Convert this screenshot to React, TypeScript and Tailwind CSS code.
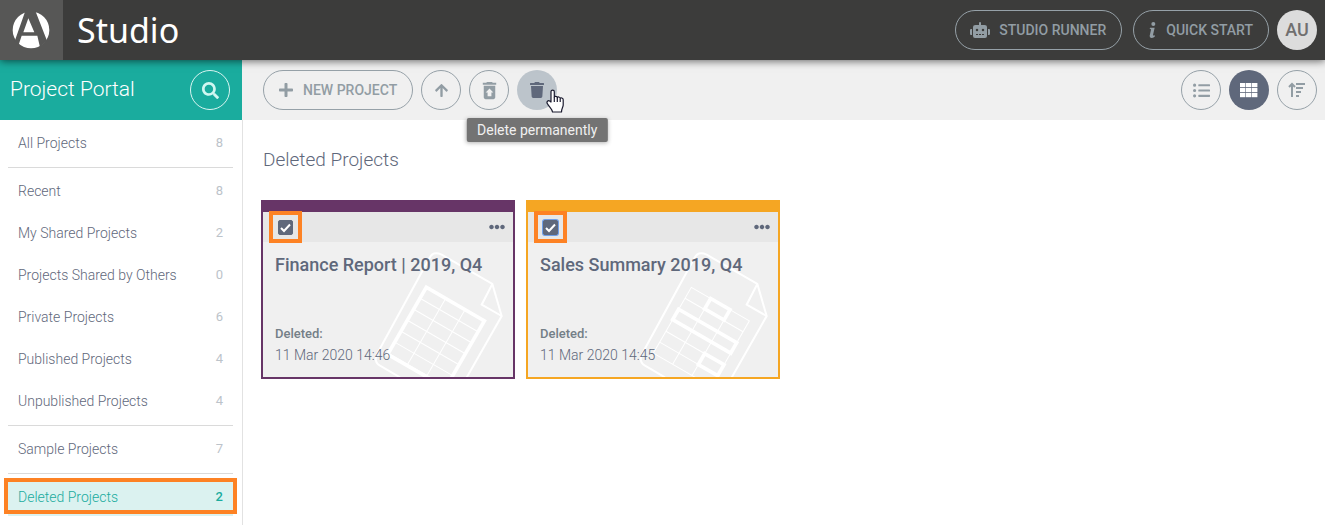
import React from 'react';
import { FaArrowUp, FaEllipsisH, FaListUl, FaPlus, FaRobot, FaSearch, FaTrash } from 'react-icons/fa';
import { MdRestoreFromTrash } from 'react-icons/md';

type NavEntry = { label: string; count: number; active?: boolean };

const NAV_GROUPS: NavEntry[][] = [
    [{ label: 'All Projects', count: 8 }],
    [
        { label: 'Recent', count: 8 },
        { label: 'My Shared Projects', count: 2 },
        { label: 'Projects Shared by Others', count: 0 },
        { label: 'Private Projects', count: 6 },
        { label: 'Published Projects', count: 4 },
        { label: 'Unpublished Projects', count: 4 },
    ],
    [{ label: 'Sample Projects', count: 7 }],
    [{ label: 'Deleted Projects', count: 2, active: true }],
];

const PROJECTS = [
    { id: 'finance', title: 'Finance Report | 2019, Q4', deleted: '11 Mar 2020 14:46', border: 'border-[#673567]', focused: false },
    { id: 'sales', title: 'Sales Summary 2019, Q4', deleted: '11 Mar 2020 14:45', border: 'border-[#f5a623]', focused: true },
];

const ROUND = 'flex size-10 shrink-0 items-center justify-center rounded-full';
const OUTLINE = 'border border-[#96a1a8] text-[#929da4]';
const PILL = 'flex h-10 items-center rounded-full text-sm font-medium';

const Logo: React.FC = () => (
    <svg viewBox="0 0 189 180" className="h-[60px] w-[63px]" aria-hidden="true">
        <circle cx="93" cy="90" r="55" fill="#fff" />
        <path
            d="M77 30H105L141 122L120 142L112 107H65L56 134L44 124Z M85 55L70 97H103Z"
            fill="#575756"
            fillRule="evenodd"
        />
    </svg>
);

const InfoIcon: React.FC = () => (
    <svg viewBox="0 0 21 48" className="h-4 w-[7px]" fill="currentColor" aria-hidden="true">
        <circle cx="13" cy="6" r="6" />
        <path d="M3 17H17L12 39Q12 42 18 40L17 44Q12 48 7 48Q1 47 2 41L6 23Q6 20 2 20Z" />
    </svg>
);

const GridIcon: React.FC = () => (
    <svg viewBox="0 0 18 15" className="h-[15px] w-[18px]" fill="currentColor" aria-hidden="true">
        {[0, 5, 10].map((y) =>
            [0, 6, 12].map((x) => <rect key={`${x}-${y}`} x={x} y={y} width="5.4" height="4.2" />)
        )}
    </svg>
);

const SortIcon: React.FC = () => (
    <svg viewBox="0 0 18 16" className="h-4 w-[18px]" fill="none" stroke="currentColor" strokeWidth="2" aria-hidden="true">
        <path d="M4 15V2M1 5L4 2L7 5" />
        <path d="M8 2H17M8 6H15M8 10H13M8 14H11" />
    </svg>
);

const HandCursor: React.FC = () => (
    <svg viewBox="0 0 18 24" className="pointer-events-none absolute top-[19px] left-[29px] z-20 h-6 w-[18px]" aria-hidden="true">
        <path
            d="M5 13V2.8C5 .6 8.3.6 8.3 2.8V8.5C8.3 6.9 11.3 6.9 11.3 8.8C11.5 7.5 14.2 7.7 14.2 9.6C14.6 8.4 17.2 8.8 17.2 10.8V16C17.2 18 15.5 19.5 15.5 23H6.5C6.3 20 3.2 18 1.3 14.5C.3 12.7 2 11.1 3.7 12Z"
            fill="#fff"
            stroke="#1a1a2e"
            strokeWidth="1.2"
            strokeLinejoin="round"
        />
        <path d="M8.3 8.5V13M11.3 9V13M14.2 10V13" stroke="#1a1a2e" strokeWidth="1.2" />
    </svg>
);

const Sheet: React.FC<{ variant: string }> = ({ variant }) => (
    <svg
        viewBox="24 156 750 405"
        className="pointer-events-none absolute right-0 bottom-0 h-[135px] w-[250px]"
        fill="none"
        stroke="#fff"
        strokeWidth="6"
        aria-hidden="true"
    >
        <path d="M435 562L375 527Q355 515 366 492L523 205Q533 182 560 194L712 282L740 378L633 566" />
        <path d="M712 282L680 344L740 378" />
        <g transform="translate(514 292) rotate(30)">
            <path d="M0 0H201V228H0ZM67 0V228M134 0V228" strokeWidth="3" />
            <path d="M0 38H201M0 76H201M0 114H201M0 152H201M0 190H201" strokeWidth="3" />
            {variant === 'finance' ? (
                <path d="M0 0H201V232H0Z" strokeWidth="11" />
            ) : (
                <path d="M67 0H134V36H67ZM0 76H201V112H0ZM134 152H201V190H134Z" strokeWidth="11" />
            )}
        </g>
    </svg>
);

const App: React.FC = () => {
    return (
        <div className="flex min-h-screen flex-col bg-white font-['Roboto',sans-serif] text-[#5f687b]">
            <header className="relative z-10 flex h-[60px] items-center bg-[#3c3c3b] pr-2 shadow-[0_1px_8px_rgba(0,0,0,0.6)]">
                <div className="bg-[#575756]">
                    <Logo />
                </div>
                <span className="ml-3.5 font-['Noto_Sans',sans-serif] text-[34px] leading-[60px] text-white">Studio</span>
                <div className="ml-auto flex items-center gap-2">
                    <button type="button" className={`mr-[3px] gap-[9px] pr-[15px] pl-3.5 ${PILL} ${OUTLINE}`}>
                        <FaRobot size={20} />
                        STUDIO RUNNER
                    </button>
                    <button type="button" className={`gap-2.5 px-[15px] ${PILL} ${OUTLINE}`}>
                        <InfoIcon />
                        QUICK START
                    </button>
                    <button type="button" className={`${ROUND} bg-[#dcdcdc] text-lg font-medium text-[#706f6f]`}>AU</button>
                </div>
            </header>

            <div className="flex flex-1">
                <aside className="w-[243px] shrink-0 border-r border-[#e2e2e2]">
                    <div className="-mr-px flex h-[60px] items-center justify-between border-r border-[#f0f0f0] bg-[#1aac9e] pr-3 pl-2.5 text-white">
                        <h1 className="text-[21px] font-light">Project Portal</h1>
                        <button type="button" aria-label="Search" className={`${ROUND} border border-[#d9f5f1] text-[#d0f7f1]`}>
                            <FaSearch size={17} />
                        </button>
                    </div>
                    <nav className="pr-[9px] pl-2">
                        {NAV_GROUPS.map((group, i) => (
                            <ul key={i} className="flex flex-col gap-1 border-b border-[#dadada] pt-1 pb-[5px] last:border-0">
                                {group.map((item) => (
                                    <li key={item.label} className="relative">
                                        <a
                                            href="#"
                                            className={`flex h-[38px] items-center justify-between px-2.5 text-sm font-light ${item.active ? 'bg-[#dbf2f0] text-[#1aac9e]' : ''}`}
                                        >
                                            {item.label}
                                            <span className={`text-[13px] ${item.active ? 'font-medium' : 'font-normal text-[#bcc3ca]'}`}>{item.count}</span>
                                        </a>
                                        {item.active && (
                                            <span className="pointer-events-none absolute -inset-x-1 top-0 h-9 border-4 border-[#fd8224]"></span>
                                        )}
                                    </li>
                                ))}
                            </ul>
                        ))}
                    </nav>
                </aside>

                <main className="min-w-0 flex-1">
                    <div className="flex h-[60px] items-center gap-2 bg-[#f0f0f0] pr-2 pl-5">
                        <button type="button" className={`gap-[9px] pr-[15px] pl-3.5 ${PILL} ${OUTLINE}`}>
                            <FaPlus size={16} />
                            NEW PROJECT
                        </button>
                        <button type="button" aria-label="Move up" className={`${ROUND} ${OUTLINE}`}>
                            <FaArrowUp size={15} />
                        </button>
                        <button type="button" aria-label="Restore" className={`${ROUND} ${OUTLINE}`}>
                            <MdRestoreFromTrash size={23} />
                        </button>
                        <div className="relative">
                            <button type="button" aria-labelledby="delete-tip" className={`${ROUND} bg-[#bcc4cb] text-[#5f687b]`}>
                                <FaTrash size={16} />
                            </button>
                            <HandCursor />
                            <div
                                id="delete-tip"
                                role="tooltip"
                                className="absolute top-12 left-1/2 z-10 -translate-x-1/2 rounded-xs bg-[#737373] px-2.5 text-sm leading-6 whitespace-nowrap text-[#f0f0f0] shadow-[0_1px_4px_rgba(0,0,0,0.3)]"
                            >
                                Delete permanently
                            </div>
                        </div>
                        <div className="ml-auto flex gap-2">
                            <button type="button" aria-label="List view" className={`${ROUND} ${OUTLINE}`}>
                                <FaListUl size={17} />
                            </button>
                            <button type="button" aria-label="Grid view" className={`${ROUND} bg-[#5f687b] text-white`}>
                                <GridIcon />
                            </button>
                            <button type="button" aria-label="Sort" className={`${ROUND} ${OUTLINE}`}>
                                <SortIcon />
                            </button>
                        </div>
                    </div>

                    <h2 className="px-5 pt-5 text-[19px] leading-10 font-light">Deleted Projects</h2>
                    <div className="flex flex-wrap gap-[11px] px-[18px] pt-5">
                        {PROJECTS.map((p) => (
                            <article key={p.id} className={`w-[254px] border-2 border-t-12 bg-[#f0f0f0] ${p.border}`}>
                                <div className="relative flex h-[30px] items-center justify-between bg-[#e7e7e7] pr-2 pl-[15px]">
                                    <input
                                        id={p.id}
                                        type="checkbox"
                                        defaultChecked
                                        className={`peer size-[15px] appearance-none rounded-xs border border-[#5f687b] checked:bg-[#5f687b] ${p.focused ? 'ring-1 ring-[#6f9fe8]' : ''}`}
                                    />
                                    <svg viewBox="0 0 15 15" className="pointer-events-none absolute left-[15px] hidden size-[15px] peer-checked:block" aria-hidden="true">
                                        <path d="M3 8L6 11L12 4.5" fill="none" stroke="#fff" strokeWidth="2" />
                                    </svg>
                                    <span className="pointer-events-none absolute -top-px left-1.5 h-8 w-[33px] border-4 border-[#fd8224]"></span>
                                    <button type="button" aria-label="More options">
                                        <FaEllipsisH size={16} />
                                    </button>
                                </div>
                                <div className="relative px-3 pt-[11px] pb-3">
                                    <Sheet variant={p.id} />
                                    <div className="relative">
                                        <label htmlFor={p.id} className="block text-lg leading-6 font-medium">{p.title}</label>
                                        <p className="mt-[46px] text-[13px] leading-[22px] font-medium text-[#747f87]">Deleted:</p>
                                        <p className="text-sm leading-5 font-light">{p.deleted}</p>
                                    </div>
                                </div>
                            </article>
                        ))}
                    </div>
                </main>
            </div>
        </div>
    );
};

export default App;
